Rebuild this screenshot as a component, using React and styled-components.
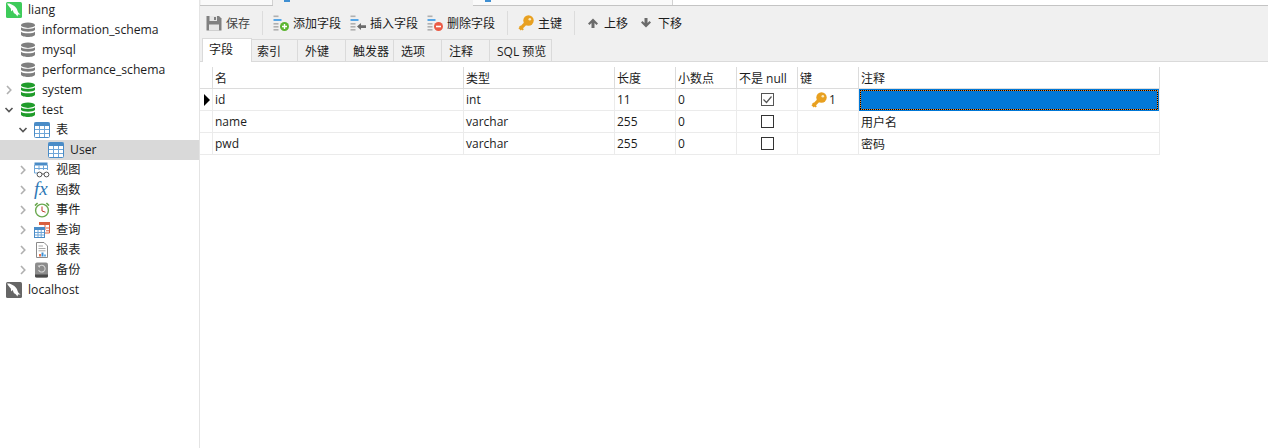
import React from "react";
import styled, { createGlobalStyle } from "styled-components";

const GlobalStyle = createGlobalStyle`
  html, body {
    margin: 0;
    padding: 0;
    background: #fff;
    overflow: hidden;
  }
  body {
    font-family: "Open Sans", "Noto Sans CJK SC", sans-serif;
    font-size: 12px;
    color: #1c1c1c;
  }
`;

const Page = styled.div`
  display: flex;
  width: 1268px;
  height: 448px;
  overflow: hidden;
`;

/* left tree */
const Sidebar = styled.div`
  width: 199px;
  flex: none;
  border-right: 1px solid #e4e4e4;
`;

const TreeRow = styled.div`
  display: flex;
  align-items: center;
  height: 20px;
  padding-left: ${(p) => (p.$level === 0 ? 6 : 6 + 14 * (p.$level - 1))}px;
  background: ${(p) => (p.$selected ? "#d9d9d9" : "transparent")};
`;

const Twisty = styled.span`
  display: flex;
  align-items: center;
  width: 14px;
  height: 20px;
  flex: none;
  margin-left: -2px;
  margin-right: 2px;
`;

const TreeLabel = styled.span`
  margin-left: 6px;
  margin-bottom: 2px;
  font-size: 12.2px;
  white-space: nowrap;
`;

/* right side */
const Main = styled.div`
  flex: 1;
  min-width: 0;
  display: flex;
  flex-direction: column;
`;

const TopTabs = styled.div`
  display: flex;
  height: 5px;
  border-bottom: 1px solid #c4c4c4;
  background: #fff;
  padding-left: 1px;
  &::before {
    content: "";
    width: 1px;
    margin-left: -1px;
    background: #f0f0f0;
  }
`;

const TopTab = styled.div`
  width: ${(p) => p.$width}px;
  flex: none;
  overflow: hidden;
  padding-left: ${(p) => p.$iconAt || 0}px;
  background: ${(p) => (p.$active ? "#f0f0f0" : "#fafafa")};
  box-sizing: border-box;
  margin-bottom: ${(p) => (p.$active ? "-1px" : "0")};
  border-right: ${(p) => (p.$active ? "none" : "1px solid #d2d2d2")};
`;

const TabIconTail = styled.div`
  width: 6px;
  height: 2px;
  background: #3f8fd2;
`;

const Toolbar = styled.div`
  display: flex;
  align-items: center;
  box-sizing: border-box;
  height: 32px;
  padding: 2px 0 0 6px;
  background: #f0f0f0;
`;

const ToolButton = styled.div`
  display: flex;
  align-items: center;
  gap: 4px;
  margin-right: ${(p) => p.$space || 9}px;
  white-space: nowrap;
  font-size: 12px;
  color: ${(p) => (p.$muted ? "#444" : "#1c1c1c")};
`;

const ToolSep = styled.div`
  width: 1px;
  height: 24px;
  background: #dcdcdc;
  margin: 0 ${(p) => p.$after || 10}px 0 3px;
`;

const TabBar = styled.div`
  display: flex;
  align-items: flex-end;
  height: 24px;
  padding-left: 2px;
  background: #f0f0f0;
  border-bottom: 1px solid #dadada;
  box-sizing: border-box;
`;

const Tab = styled.div`
  box-sizing: border-box;
  width: ${(p) => p.$width}px;
  height: ${(p) => (p.$active ? 24 : 22)}px;
  display: flex;
  align-items: center;
  padding-left: ${(p) => p.$pad}px;
  padding-bottom: ${(p) => (p.$active ? 4 : 0)}px;
  background: ${(p) => (p.$active ? "#fff" : "#f0f0f0")};
  border: 1px solid #dadada;
  border-left: ${(p) => (p.$active ? "1px solid #dadada" : "none")};
  border-bottom: none;
  margin-bottom: ${(p) => (p.$active ? "-1px" : "0")};
  position: relative;
  white-space: nowrap;
`;

const Grid = styled.div`
  margin-top: 5px;
  width: 960px;
`;

const GridRow = styled.div`
  display: grid;
  grid-template-columns: 12px 251px 151px 61px 61px 61px 61px 302px;
  height: 22px;
  box-sizing: border-box;
  border-bottom: 1px solid ${(p) => (p.$header ? "#dcdcdc" : "#ebebeb")};
`;

const Cell = styled.div`
  display: flex;
  align-items: center;
  box-sizing: border-box;
  padding-left: ${(p) => (p.$center ? 0 : 2)}px;
  border-left: ${(p) => (p.$first ? "none" : `1px solid ${p.$header ? "#dcdcdc" : "#ebebeb"}`)};
  border-right: ${(p) => (p.$last ? `1px solid ${p.$header ? "#dcdcdc" : "#ebebeb"}` : "none")};
  justify-content: ${(p) => (p.$center ? "center" : "flex-start")};
  white-space: nowrap;
  font-size: 12px;
`;

const Marker = styled.div`
  width: 0;
  height: 0;
  margin-left: 2px;
  border-left: 6px solid #000;
  border-top: 6px solid transparent;
  border-bottom: 6px solid transparent;
`;

/* blue cell being edited, dotted orange and black focus line inside it */
const dotsX = "repeating-linear-gradient(90deg, #000 0 1px, #f28c28 1px 2px)";
const dotsY = "repeating-linear-gradient(180deg, #000 0 1px, #f28c28 1px 2px)";

const Editing = styled.div`
  flex: 1;
  align-self: stretch;
  position: relative;
  margin: 0 0 -1px -2px;
  background: #0078d7;
  &::after {
    content: "";
    position: absolute;
    inset: 1px;
    background:
      ${dotsX} top left / 100% 1px no-repeat,
      ${dotsX} bottom left / 100% 1px no-repeat,
      ${dotsY} top left / 1px 100% no-repeat,
      ${dotsY} top right / 1px 100% no-repeat;
  }
`;

const Check = styled.span`
  display: flex;
  width: 13px;
  height: 13px;
  box-sizing: border-box;
  border: 1px solid ${(p) => (p.$checked ? "#555" : "#333")};
  background: #fff;
`;

const KeyCell = styled.span`
  display: flex;
  align-items: center;
  gap: 1px;
  margin-left: 11px;
  font-size: 12px;
`;

/* icons */
const Chevron = ({ open }) => (
  <svg width="10" height="10" viewBox="0 0 10 10">
    {open ? (
      <path d="M1.5 3 L5 6.5 L8.5 3" fill="none" stroke="#555" strokeWidth="1.6" />
    ) : (
      <path d="M3 1 L6.8 5 L3 9" fill="none" stroke="#b0b0b0" strokeWidth="1.6" />
    )}
  </svg>
);

const Dolphin = ({ color }) => (
  <svg width="16" height="16" viewBox="0 0 16 16">
    <rect width="16" height="16" rx="1.5" fill={color} />
    <path
      d="M1 1.6 C3 1.2 5 1.8 6.6 3 C9 4.2 11 6.2 11.6 9 C12 10.6 13 11.6 14.6 12.6 L12 12.4 L11.4 14.6 C10.6 13 9.6 11.8 8 11.2 C7.4 10.2 7 9 6.6 8 L5.2 9.4 L4.8 6.6 C3.6 5.4 2.2 3.6 1 1.6 Z"
      fill="#fff"
    />
  </svg>
);

const Database = ({ color }) => (
  <svg width="16" height="16" viewBox="0 0 16 16">
    <ellipse cx="8" cy="3.2" rx="7" ry="2.7" fill={color} />
    <path d="M1 5.2 C3 7.2 13 7.2 15 5.2 V8 C13 10.2 3 10.2 1 8 Z" fill={color} />
    <path d="M1 9.8 C3 11.8 13 11.8 15 9.8 V12.8 C14 15.8 2 15.8 1 12.8 Z" fill={color} />
  </svg>
);

const TableIcon = () => (
  <svg width="16" height="16" viewBox="0 0 16 16">
    <rect x="0.5" y="0.5" width="15" height="15" rx="1" fill="#fff" stroke="#4a8cc7" />
    <rect x="0.5" y="0.5" width="15" height="3.5" fill="#4a8cc7" />
    <path d="M5.5 4 V15 M10.5 4 V15 M1 7.5 H15 M1 11.5 H15" stroke="#6ea6d8" strokeWidth="1" />
  </svg>
);

const ViewIcon = () => (
  <svg width="16" height="16" viewBox="0 0 16 16">
    <rect x="0.5" y="0.5" width="13" height="3" fill="#4a8cc7" />
    <path d="M0.5 3 V11 H4 M13.5 3 V8 M5 3.5 V8 M9.5 3.5 V8 M1 6.5 H13" fill="none" stroke="#6ea6d8" />
    <circle cx="5.5" cy="12.5" r="2.4" fill="#fff" stroke="#555" />
    <circle cx="12.5" cy="12.5" r="2.4" fill="#fff" stroke="#555" />
    <path d="M8 12 H10" stroke="#555" />
  </svg>
);

const FxIcon = () => (
  <svg width="16" height="16" viewBox="0 0 16 16" overflow="visible">
    <text
      x="0"
      y="13"
      fontFamily="Liberation Serif, serif"
      fontStyle="italic"
      fontSize="19"
      fill="#2f78b5"
    >
      fx
    </text>
  </svg>
);

const ClockIcon = () => (
  <svg width="16" height="16" viewBox="0 0 16 16">
    <path d="M1 3.6 L3.6 1 M15 3.6 L12.4 1" stroke="#6aa84f" strokeWidth="1.6" />
    <circle cx="8" cy="8.5" r="6.4" fill="#fff" stroke="#6aa84f" strokeWidth="1.4" />
    <path d="M8 4.5 V9 L11.5 10.2" fill="none" stroke="#c0392b" strokeWidth="1" />
  </svg>
);

const QueryIcon = () => (
  <svg width="16" height="16" viewBox="0 0 16 16">
    <rect x="5.5" y="0" width="10" height="11" fill="#fff" />
    <rect x="5" y="0" width="11" height="3" fill="#d9603f" />
    <path d="M15.5 3 V11 H11 M11 3 V8 M12 6 H15.5 M12 8.8 H15.5" fill="none" stroke="#d9603f" />
    <rect x="0.5" y="5.5" width="10" height="10" fill="#fff" stroke="#4a8cc7" />
    <rect x="0.5" y="5.5" width="10" height="2.5" fill="#4a8cc7" />
    <path d="M4 8 V15 M7.2 8 V15 M1 10.5 H10 M1 13 H10" stroke="#6ea6d8" />
  </svg>
);

const ReportIcon = () => (
  <svg width="16" height="16" viewBox="0 0 16 16">
    <path d="M2.5 0.5 H10 L13.5 4 V15.5 H2.5 Z" fill="#fff" stroke="#8a8a8a" />
    <path d="M4.5 4 H9 M4.5 6.5 H11.5 M4.5 8.8 H11.5" stroke="#a8a8a8" />
    <rect x="5" y="12" width="2" height="2.5" fill="#e8734a" />
    <rect x="7.5" y="10.5" width="2" height="4" fill="#3f8fd2" />
    <rect x="10" y="12.5" width="2" height="2" fill="#6ab0e4" />
  </svg>
);

const BackupIcon = () => (
  <svg width="16" height="16" viewBox="0 0 16 16">
    <rect x="1" y="0.5" width="13" height="15" rx="2" fill="#8c8c8c" />
    <path d="M1 12.5 H14 V14 C14 15 13.4 15.5 12.5 15.5 H2.5 C1.6 15.5 1 15 1 14 Z" fill="#4a4a4a" />
    <path d="M5 4.6 A3.4 3.4 0 1 1 4.6 8" fill="none" stroke="#d4d4d4" strokeWidth="1.1" />
    <path d="M3.6 3.6 L6.4 3.4 L5.4 6 Z" fill="#d4d4d4" />
  </svg>
);

const SaveIcon = () => (
  <svg width="16" height="16" viewBox="0 0 16 16">
    <path d="M0.5 1 H13 L15.5 3.5 V15.5 H0.5 Z" fill="#808080" />
    <rect x="3.5" y="1" width="7.5" height="5" fill="#e6e6e6" />
    <rect x="3" y="9.5" width="10" height="6" fill="#e6e6e6" />
    <rect x="8" y="2" width="2" height="3" fill="#808080" />
  </svg>
);

const FieldLines = () => (
  <>
    <rect x="0.5" y="0.5" width="5" height="1.6" fill="#b0b0b0" />
    <rect x="0.5" y="4" width="8" height="2" fill="#56a6e6" />
    <rect x="0.5" y="8" width="5" height="1.6" fill="#b0b0b0" />
    <rect x="0.5" y="11" width="5" height="1.6" fill="#b0b0b0" />
    <rect x="0.5" y="14" width="5" height="1.6" fill="#b0b0b0" />
  </>
);

const AddFieldIcon = () => (
  <svg width="16" height="16" viewBox="0 0 16 16">
    <FieldLines />
    <circle cx="11.5" cy="11.5" r="4.5" fill="#5cb531" />
    <path d="M9 11.5 H14 M11.5 9 V14" stroke="#fff" strokeWidth="1.4" />
  </svg>
);

const InsertFieldIcon = () => (
  <svg width="16" height="16" viewBox="0 0 16 16">
    <FieldLines />
    <path d="M7 11.5 L11 8 V10.2 H16 V13 H11 V15 Z" fill="#6b6b6b" />
  </svg>
);

const DeleteFieldIcon = () => (
  <svg width="16" height="16" viewBox="0 0 16 16">
    <FieldLines />
    <circle cx="11.5" cy="11.5" r="4.5" fill="#ea5a44" />
    <path d="M9 11.5 H14" stroke="#fff" strokeWidth="1.6" />
  </svg>
);

const KeyIcon = () => (
  <svg width="16" height="16" viewBox="0 0 16 16">
    <circle cx="10.5" cy="5.5" r="5.2" fill="#e8a020" />
    <path d="M8 8 L1.6 14.4" stroke="#e8a020" strokeWidth="3.2" />
    <path d="M1.8 11.2 L5.2 14.8" stroke="#e8a020" strokeWidth="1.8" />
    <circle cx="11.8" cy="4.2" r="1.3" fill="#fbe9bd" />
  </svg>
);

const ArrowUp = () => (
  <svg width="16" height="16" viewBox="-1 0 16 16">
    <path d="M8 3.5 L13 8.5 L11.5 10 L9.5 8 V13 H6.5 V8 L4.5 10 L3 8.5 Z" fill="#6b6b6b" />
  </svg>
);

const ArrowDown = () => (
  <svg width="16" height="16" viewBox="0 0 16 16">
    <path d="M8 12.5 L13 7.5 L11.5 6 L9.5 8 V3 H6.5 V8 L4.5 6 L3 7.5 Z" fill="#6b6b6b" />
  </svg>
);

const CheckMark = () => (
  <svg width="11" height="11" viewBox="0 0 11 11">
    <path d="M1.5 5.5 L4.5 8.5 L9.5 2.5" fill="none" stroke="#555" strokeWidth="1.2" />
  </svg>
);

const tree = [
  { level: 0, label: "liang", icon: <Dolphin color="#3ecb5a" /> },
  { level: 1, label: "information_schema", icon: <Database color="#7f7f7f" /> },
  { level: 1, label: "mysql", icon: <Database color="#7f7f7f" /> },
  { level: 1, label: "performance_schema", icon: <Database color="#7f7f7f" /> },
  { level: 1, label: "system", icon: <Database color="#1f9c2a" />, twisty: "closed" },
  { level: 1, label: "test", icon: <Database color="#1f9c2a" />, twisty: "open" },
  { level: 2, label: "表", icon: <TableIcon />, twisty: "open" },
  { level: 3, label: "User", icon: <TableIcon />, selected: true },
  { level: 2, label: "视图", icon: <ViewIcon />, twisty: "closed" },
  { level: 2, label: "函数", icon: <FxIcon />, twisty: "closed" },
  { level: 2, label: "事件", icon: <ClockIcon />, twisty: "closed" },
  { level: 2, label: "查询", icon: <QueryIcon />, twisty: "closed" },
  { level: 2, label: "报表", icon: <ReportIcon />, twisty: "closed" },
  { level: 2, label: "备份", icon: <BackupIcon />, twisty: "closed" },
  { level: 0, label: "localhost", icon: <Dolphin color="#666" /> },
];

const tabs = [
  { label: "字段", width: 50, pad: 6, active: true },
  { label: "索引", width: 46, pad: 5 },
  { label: "外键", width: 48, pad: 7 },
  { label: "触发器", width: 48, pad: 7 },
  { label: "选项", width: 48, pad: 7 },
  { label: "注释", width: 48, pad: 7 },
  { label: "SQL 预览", width: 62, pad: 7 },
];

const headers = ["名", "类型", "长度", "小数点", "不是 null", "键", "注释"];

const rows = [
  { name: "id", type: "int", len: "11", checked: true, keyed: true, current: true, note: "" },
  { name: "name", type: "varchar", len: "255", note: "用户名" },
  { name: "pwd", type: "varchar", len: "255", note: "密码" },
];

export default function App() {
  return (
    <Page>
      <GlobalStyle />
      <Sidebar>
        {tree.map((item) => (
          <TreeRow key={item.label} $level={item.level} $selected={item.selected}>
            {item.level > 0 && (
              <Twisty>{item.twisty && <Chevron open={item.twisty === "open"} />}</Twisty>
            )}
            {item.icon}
            <TreeLabel>{item.label}</TreeLabel>
          </TreeRow>
        ))}
      </Sidebar>
      <Main>
        <TopTabs>
          <TopTab $width={72} />
          <TopTab $width={200} $active $iconAt={11}>
            <TabIconTail />
          </TopTab>
          <TopTab $width={200} $iconAt={12}>
            <TabIconTail />
          </TopTab>
        </TopTabs>
        <Toolbar>
          <ToolButton $muted>
            <SaveIcon />
            保存
          </ToolButton>
          <ToolSep />
          <ToolButton>
            <AddFieldIcon />
            添加字段
          </ToolButton>
          <ToolButton>
            <InsertFieldIcon />
            插入字段
          </ToolButton>
          <ToolButton>
            <DeleteFieldIcon />
            删除字段
          </ToolButton>
          <ToolSep />
          <ToolButton>
            <KeyIcon />
            主键
          </ToolButton>
          <ToolSep $after={9} />
          <ToolButton $space={10}>
            <ArrowUp />
            上移
          </ToolButton>
          <ToolButton>
            <ArrowDown />
            下移
          </ToolButton>
        </Toolbar>
        <TabBar>
          {tabs.map((tab) => (
            <Tab key={tab.label} $width={tab.width} $pad={tab.pad} $active={tab.active}>
              {tab.label}
            </Tab>
          ))}
        </TabBar>
        <Grid>
          <GridRow $header>
            <Cell $first $header />
            {headers.map((h, i) => (
              <Cell key={h} $header $last={i === headers.length - 1}>
                {h}
              </Cell>
            ))}
          </GridRow>
          {rows.map((row) => (
            <GridRow key={row.name}>
              <Cell $first>{row.current && <Marker />}</Cell>
              <Cell>{row.name}</Cell>
              <Cell>{row.type}</Cell>
              <Cell>{row.len}</Cell>
              <Cell>0</Cell>
              <Cell $center>
                <Check $checked={row.checked}>{row.checked && <CheckMark />}</Check>
              </Cell>
              <Cell>
                {row.keyed && (
                  <KeyCell>
                    <KeyIcon />
                    <span style={{ marginLeft: 1 }}>1</span>
                  </KeyCell>
                )}
              </Cell>
              <Cell $last>{row.current ? <Editing /> : row.note}</Cell>
            </GridRow>
          ))}
        </Grid>
      </Main>
    </Page>
  );
}
